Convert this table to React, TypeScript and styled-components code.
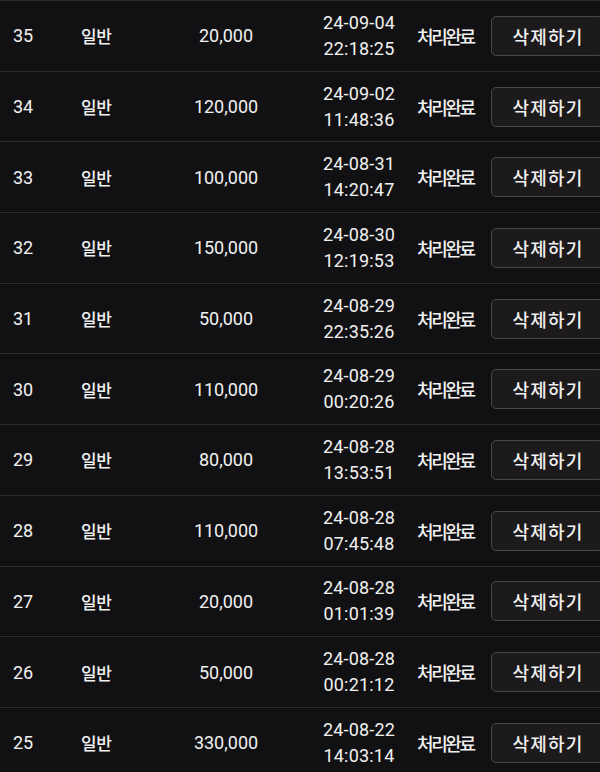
import styled, { createGlobalStyle } from 'styled-components';

const GlobalStyle = createGlobalStyle`
  html, body {
    margin: 0;
    padding: 0;
    background: #111113;
    overflow: hidden;
  }
`;

const Page = styled.div`
  width: 600px;
  height: 772px;
  overflow: hidden;
  background: #111113;
  color: #f1f1f1;
  font-family: Roboto, "Noto Sans CJK KR", sans-serif;
`;

const Row = styled.div`
  display: grid;
  grid-template-columns: 68px 70px 150px 116px 74px 113px;
  align-items: center;
  height: 69.7px;
  padding-left: 13px;
  border-top: 1px solid #2d2d30;
`;

const Num = styled.div`
  font-size: 18px;
`;

const Kind = styled.div`
  font-family: "Noto Sans CJK KR", sans-serif;
  font-size: 17px;
  font-weight: 500;
  letter-spacing: -0.5px;
`;

const Amount = styled.div`
  font-size: 18px;
  text-align: center;
`;

const DateCell = styled.div`
  font-size: 18px;
  line-height: 26px;
  text-align: center;
  letter-spacing: 0.2px;
`;

const Status = styled.div`
  font-family: "Noto Sans CJK KR", sans-serif;
  font-size: 18px;
  font-weight: 500;
  letter-spacing: -2.4px;
`;

const DeleteButton = styled.button`
  height: 40px;
  width: 113px;
  box-sizing: border-box;
  border: 1px solid #4a4847;
  border-radius: 5px;
  background: #1c1a1a;
  color: #f1f1f1;
  font-family: "Noto Sans CJK KR", sans-serif;
  font-size: 18px;
  font-weight: 500;
  letter-spacing: 1.2px;
  padding: 0 0 0 1px;
`;

const rows = [
  { no: 35, amount: '20,000', date: '24-09-04', time: '22:18:25' },
  { no: 34, amount: '120,000', date: '24-09-02', time: '11:48:36' },
  { no: 33, amount: '100,000', date: '24-08-31', time: '14:20:47' },
  { no: 32, amount: '150,000', date: '24-08-30', time: '12:19:53' },
  { no: 31, amount: '50,000', date: '24-08-29', time: '22:35:26' },
  { no: 30, amount: '110,000', date: '24-08-29', time: '00:20:26' },
  { no: 29, amount: '80,000', date: '24-08-28', time: '13:53:51' },
  { no: 28, amount: '110,000', date: '24-08-28', time: '07:45:48' },
  { no: 27, amount: '20,000', date: '24-08-28', time: '01:01:39' },
  { no: 26, amount: '50,000', date: '24-08-28', time: '00:21:12' },
  { no: 25, amount: '330,000', date: '24-08-22', time: '14:03:14' },
];

function App() {
  return (
    <Page>
      <GlobalStyle />
      {rows.map((r) => (
        <Row key={r.no}>
          <Num>{r.no}</Num>
          <Kind>일반</Kind>
          <Amount>{r.amount}</Amount>
          <DateCell>
            {r.date}
            <br />
            {r.time}
          </DateCell>
          <Status>처리완료</Status>
          <DeleteButton>삭제하기</DeleteButton>
        </Row>
      ))}
    </Page>
  );
}

export default App;
